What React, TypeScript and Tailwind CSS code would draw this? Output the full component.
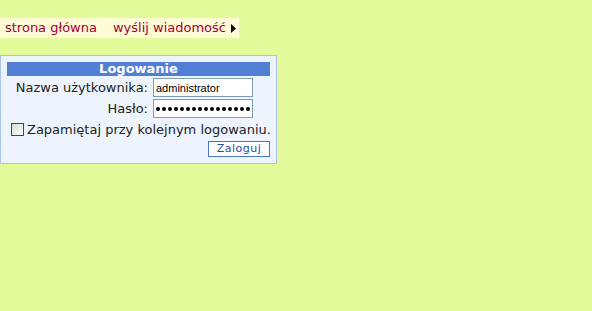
import React from "react";

const verdana = { fontFamily: '"DejaVu Sans", Verdana, sans-serif' };
const arial = { fontFamily: '"Liberation Sans", Arial, sans-serif' };

function NavBar() {
  return (
    <div className="flex h-[20px] w-fit items-center bg-[#fffbd7] pr-[3px] text-[13px] text-[#a3002d]" style={verdana}>
      <a className="pl-[5px] pr-[16px]">strona główna</a>
      <a className="pr-[5px]">wyślij wiadomość</a>
      <svg width="5" height="9" viewBox="0 0 5 9">
        <path d="M0 0 L5 4.5 L0 9 Z" fill="#000" />
      </svg>
    </div>
  );
}

function PasswordField({ length }: { length: number }) {
  return (
    <div className="flex h-[19px] w-[100px] items-center gap-[2px] border border-[#7f9db9] bg-white pl-[2px]">
      {Array.from({ length }).map((_, i) => (
        <span key={i} className="h-[4px] w-[4px] rounded-full bg-black" />
      ))}
    </div>
  );
}

function LoginBox() {
  return (
    <div className="flex w-[277px] flex-col border border-[#aac3ea] bg-[#eef4fd] px-[6px] pt-[6px] pb-[6px] text-[13px] text-[#222]" style={verdana}>
      <div className="h-[14px] bg-[#517fd5] text-center text-[13px] font-bold leading-[14px] text-white">Logowanie</div>
      <div className="mt-[2px] grid grid-cols-[141px_100px] gap-x-[5px] gap-y-[2px]">
        <label className="flex h-[19px] items-center justify-end whitespace-nowrap">Nazwa użytkownika:</label>
        <input
          readOnly
          value="administrator"
          className="h-[19px] w-[100px] border border-[#7f9db9] bg-white px-[2px] text-[11px] text-black outline-none"
          style={arial}
        />
        <label className="flex h-[19px] items-center justify-end">Hasło:</label>
        <PasswordField length={16} />
      </div>
      <div className="mt-[3px] flex h-[17px] items-center gap-[3px] whitespace-nowrap pl-[4px]">
        <span className="h-[13px] w-[13px] shrink-0 border border-[#1c5180] bg-gradient-to-br from-[#dcdcd6] to-white" />
        <span>Zapamiętaj przy kolejnym logowaniu.</span>
      </div>
      <div className="mt-[3px] flex justify-end">
        <button className="h-[16px] w-[62px] border border-[#4a76cc] bg-white text-[11px] leading-[14px] tracking-[0.5px] text-[#2a4ca0]">Zaloguj</button>
      </div>
    </div>
  );
}

export default function App() {
  return (
    <div className="h-[311px] w-full bg-[#e3fb9b] pt-[18px]">
      <NavBar />
      <div className="mt-[17px]">
        <LoginBox />
      </div>
    </div>
  );
}
